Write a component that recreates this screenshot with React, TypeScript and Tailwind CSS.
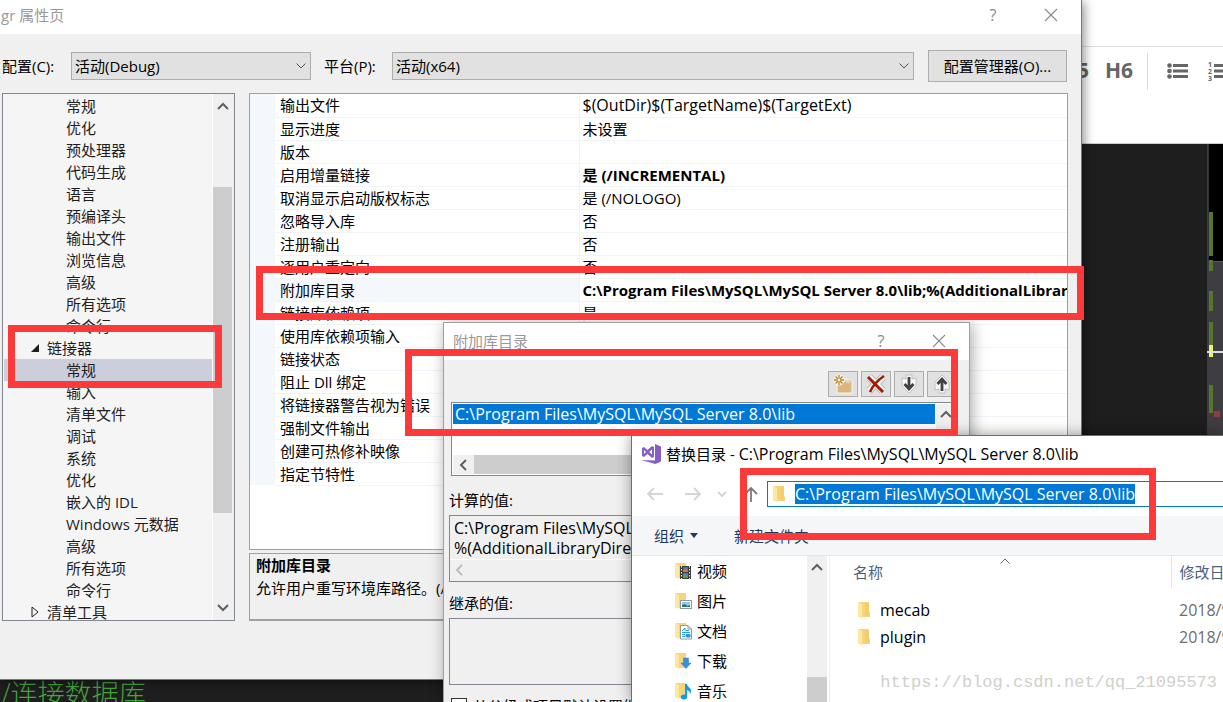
import React from "react";

// Linker page tree, in display order
interface TreeItem {
	label: string;
	state?: "open" | "closed";
	selected?: boolean;
}

interface PropertyRow {
	name: string;
	value?: string;
	bold?: boolean;
	macro?: boolean;
	selected?: boolean;
}

const treeItems: TreeItem[] = [
	{ label: "常规" },
	{ label: "优化" },
	{ label: "预处理器" },
	{ label: "代码生成" },
	{ label: "语言" },
	{ label: "预编译头" },
	{ label: "输出文件" },
	{ label: "浏览信息" },
	{ label: "高级" },
	{ label: "所有选项" },
	{ label: "命令行" },
	{ label: "链接器", state: "open" },
	{ label: "常规", selected: true },
	{ label: "输入" },
	{ label: "清单文件" },
	{ label: "调试" },
	{ label: "系统" },
	{ label: "优化" },
	{ label: "嵌入的 IDL" },
	{ label: "Windows 元数据" },
	{ label: "高级" },
	{ label: "所有选项" },
	{ label: "命令行" },
	{ label: "清单工具", state: "closed" },
];

const properties: PropertyRow[] = [
	{ name: "输出文件", value: "$(OutDir)$(TargetName)$(TargetExt)", macro: true },
	{ name: "显示进度", value: "未设置" },
	{ name: "版本" },
	{ name: "启用增量链接", value: "是 (/INCREMENTAL)", bold: true },
	{ name: "取消显示启动版权标志", value: "是 (/NOLOGO)" },
	{ name: "忽略导入库", value: "否" },
	{ name: "注册输出", value: "否" },
	{ name: "逐用户重定向", value: "否" },
	{ name: "附加库目录", value: "C:\\Program Files\\MySQL\\MySQL Server 8.0\\lib;%(AdditionalLibraryDirectories)", bold: true, selected: true },
	{ name: "链接库依赖项", value: "是" },
	{ name: "使用库依赖项输入" },
	{ name: "链接状态" },
	{ name: "阻止 Dll 绑定" },
	{ name: "将链接器警告视为错误" },
	{ name: "强制文件输出" },
	{ name: "创建可热修补映像" },
	{ name: "指定节特性" },
];

const LIB_PATH = "C:\\Program Files\\MySQL\\MySQL Server 8.0\\lib";

/* ---------- Icons ---------- */

function Chevron({ dir, className = "text-[#606060]" }: { dir: "up" | "down" | "left"; className?: string }) {
	const d = { up: "M1 9 L6 4 L11 9", down: "M1 3 L6 8 L11 3", left: "M8 1 L3 6 L8 11" }[dir];
	return (
		<svg viewBox="0 0 12 12" className={`w-3 h-3 ${className}`} fill="none" stroke="currentColor" strokeWidth="2">
			<path d={d} />
		</svg>
	);
}

function CloseIcon() {
	return (
		<svg viewBox="0 0 14 14" className="w-3.5 h-3.5" fill="none" stroke="#8a8a8a" strokeWidth="1.1">
			<path d="M1 1 L13 13 M13 1 L1 13" />
		</svg>
	);
}

function Folder() {
	return (
		<svg viewBox="0 0 18 18" className="w-[18px] h-[18px]">
			<path d="M1 1 H11 V10 L12 12 V16 H1 Z" fill="#f6d57a" />
			<path d="M7 2 H11 V15 H7 Z" fill="#f3ce6c" />
			<path d="M0 1 L4 3 V17.500 L0 15.500 Z" fill="#fde8a2" />
		</svg>
	);
}

function LibraryFolder({ kind }: { kind: string }) {
	return (
		<svg viewBox="0 0 18 18" className="w-[18px] h-[18px]">
			<path d="M1 1 H11 V16 H1 Z" fill="#f6d57a" />
			<path d="M0 1 L4 3 V17 L0 15 Z" fill="#fde8a2" />
			{kind === "video" && (
				<g>
					<rect x="5" y="4" width="11" height="13" fill="#3d3d3d" />
					<path d="M6.500 4 V17 M14.500 4 V17" stroke="#e8e8e8" strokeWidth="1" strokeDasharray="1.500 1.500" />
					<rect x="8" y="5" width="5" height="5" fill="#4464c8" />
					<rect x="8" y="11" width="5" height="5" fill="#3f7ee0" />
					<path d="M8 8 L11 6 L13 9 V10 H8 Z" fill="#c97b3c" />
					<path d="M8 14 L10 12 L13 15 V16 H8 Z" fill="#6aa03d" />
				</g>
			)}
			{kind === "picture" && (
				<g>
					<rect x="5.500" y="8.500" width="11" height="8" fill="#fff" stroke="#8f989f" />
					<rect x="7" y="10" width="8" height="5" fill="#8ecbf0" />
					<path d="M7 13 L10 12 L12 14 L15 13 V15 H7 Z" fill="#2f6f79" />
				</g>
			)}
			{kind === "document" && (
				<g>
					<path d="M5.500 3.500 H13 L16.500 7 V17 H5.500 Z" fill="#fff" stroke="#8f989f" />
					<path d="M13 3.500 V7 H16.500" fill="none" stroke="#8f989f" />
					<path d="M7 9 L10 6 V9 M7 10.500 H15 M7 12.500 H10 M7 14.500 H10" fill="none" stroke="#2d9be8" />
					<path d="M11 8.500 H14 M11 12.500 H15 V15 H11 Z" fill="#4a90a0" stroke="#2d9be8" />
				</g>
			)}
			{kind === "download" && <path d="M8.500 6 H13.500 V11 H16 L11 16.500 L6 11 H8.500 Z" fill="#3590e2" stroke="#2a7ac5" strokeWidth=".5" />}
			{kind === "music" && (
				<g fill="#0f9cf0">
					<ellipse cx="9" cy="15" rx="3.200" ry="2.500" />
					<path d="M10 2 H12 C12 5 16 5.500 16 9 C16 10.500 15.500 11.500 15 12 C15 9 12.500 8 12.200 8 V15 H10 Z" />
				</g>
			)}
		</svg>
	);
}

function StudioLogo() {
	return (
		<svg viewBox="0 0 20 20" className="w-5 h-5">
			<path fillRule="evenodd" d="M1 4 L3 3 L6.500 6 L11 2 L13 3 V13 L11 14 L6.500 10 L3 13 L1 12 Z M3 6 V10 L5 8 Z M11 5.500 L8.200 8 L11 10.500 Z" fill="#865fc5" />
			<path d="M14 0 L20 2.500 V17.500 L14.500 20 L0 16 L14 16.500 Z" fill="#865fc5" />
		</svg>
	);
}

function NavArrow({ d, color }: { d: string; color: string }) {
	return (
		<svg viewBox="0 0 16 16" className="w-4 h-4" fill="none" stroke={color} strokeWidth="1.8">
			<path d={d} />
		</svg>
	);
}

/* ---------- Shared pieces ---------- */

function TitleBar({ title, className }: { title: string; className: string }) {
	return (
		<header className={`flex items-center bg-white text-[#999] ${className}`}>
			<h1 className="flex-1">{title}</h1>
			<button className="w-8 text-base text-[#8a8a8a]" title="帮助">
				?
			</button>
			<button className="ml-7 flex w-7 justify-center" title="关闭">
				<CloseIcon />
			</button>
		</header>
	);
}

function Dropdown({ id, value, className }: { id: string; value: string; className: string }) {
	return (
		<div className={`relative ${className}`}>
			<select id={id} defaultValue={value} className="h-7 w-full appearance-none border border-[#adadad] bg-[#e1e1e1] pl-[3px] outline-none">
				<option value={value}>{value}</option>
			</select>
			<svg viewBox="0 0 10 6" className="pointer-events-none absolute right-[5px] top-[11px] h-1.5 w-2.5" fill="none" stroke="#555">
				<path d="M.5 .5 L5 5 L9.500 .5" />
			</svg>
		</div>
	);
}

/* ---------- Page behind the dialogs ---------- */

function Backdrop() {
	return (
		<div className="flex h-full flex-col">
			<div className="h-[47px] border-b border-[#ddd]" />
			<div className="flex h-[97px] items-start justify-end overflow-hidden border-b border-[#ccc] pt-1.5 text-[#666]">
				<div className="flex h-[37px] shrink-0 items-center text-[21px] font-bold">
					<button className="mr-4 pb-1">H5</button>
					<button className="mr-3.5 pb-1">H6</button>
					<span className="mr-[19px] h-full w-px bg-[#ddd]" />
					<button title="无序列表" className="mr-5 pb-0.5">
						<svg viewBox="0 0 21 16" className="h-4 w-[21px]" fill="currentColor">
							<circle cx="2.500" cy="2.500" r="2.300" />
							<circle cx="2.500" cy="8" r="2.300" />
							<circle cx="2.500" cy="13.500" r="2.300" />
							<path d="M6 1 H21 V4 H6 Z M6 6.500 H21 V9.500 H6 Z M6 12 H21 V15 H6 Z" />
						</svg>
					</button>
					<button title="有序列表" className="-mr-1.5 pb-0.5">
						<svg viewBox="0 0 21 20" className="h-5 w-[21px]" fill="currentColor">
							<text x="0" y="6" fontSize="7">1</text>
							<text x="0" y="13" fontSize="7">2</text>
							<text x="0" y="20" fontSize="7">3</text>
							<path d="M6 3 H21 V6 H6 Z M6 8.500 H21 V11.500 H6 Z M6 14 H21 V17 H6 Z" />
						</svg>
					</button>
				</div>
			</div>
			<div className="flex min-h-0 flex-1 bg-[#1e1e1e]">
				<div className="flex min-w-0 flex-1 items-end">
					<p className="h-[22px] overflow-hidden whitespace-nowrap font-['Noto_Sans_CJK_SC',sans-serif] text-[27px] leading-[26px] font-light text-[#46a53e]">/连接数据库</p>
				</div>
				{/* Scroll map of the code editor */}
				<svg viewBox="0 0 16 558" className="h-[558px] w-4 shrink-0">
					<rect width="16" height="558" fill="#3e3e42" />
					<rect x="2" width="14" height="117" fill="#000" />
					<rect x="1" width="1" height="117" fill="#333337" />
					<rect x="6" y="117" width="10" height="1" fill="#555" />
					<path d="M2 68 H6 V112 H2 Z M2 116 H6 V127 H2 Z M2 147 H6 V167 H2 Z M2 178 H6 V201 H2 Z M2 241 H6 V269 H2 Z" fill="#577430" />
					<rect x="2" y="201" width="4" height="12" fill="#eef07a" />
					<rect y="207" width="16" height="2" fill="#ddd" />
					<rect x="7" y="267" width="6" height="6" fill="#953b42" />
				</svg>
			</div>
		</div>
	);
}

/* ---------- Property pages ---------- */

function Tree() {
	return (
		<div className="flex w-[233px] shrink-0 border border-[#828790] bg-[#f5f5f5]">
			<ul className="min-w-0 flex-1 overflow-hidden pt-px pl-px text-[#1e1e1e]">
				{treeItems.map((item, i) => (
					<li key={i} className={`flex h-[22px] items-center whitespace-nowrap ${item.selected ? "bg-[#cccedb]" : ""} ${item.state ? "pl-[26px]" : "pl-[62px]"}`}>
						{item.state && (
							<svg viewBox="0 0 10 12" className="mr-[7px] h-3 w-2.5">
								{item.state === "open" ? <path d="M9 2 V10 H1 Z" fill="#1e1e1e" /> : <path d="M2 1 L8 6 L2 11 Z" fill="none" stroke="#1e1e1e" />}
							</svg>
						)}
						{item.label}
					</li>
				))}
			</ul>
			<div className="flex w-[22px] flex-col items-center border-l border-white bg-[#f0f0f0] pr-0.5">
				<div className="flex h-[93px] items-start pt-1.5">
					<Chevron dir="up" />
				</div>
				<div className="h-[326px] w-full bg-[#cdcdcd]" />
				<div className="flex flex-1 items-end pb-1.5">
					<Chevron dir="down" />
				</div>
			</div>
		</div>
	);
}

function PropertyGrid() {
	return (
		<div className="h-[457px] overflow-hidden border border-[#a0a0a0] bg-white">
			<table className="w-full table-fixed border-collapse">
				<colgroup>
					<col className="w-[25px]" />
					<col className="w-[304px]" />
					<col />
				</colgroup>
				<tbody>
					{properties.map((row) => (
						<tr key={row.name} className="h-[23px]">
							<td className="bg-[#f4f7fc] p-0" />
							<td className={`border-r border-b border-[#f0f3f9] p-0 pl-[5px] leading-[22px] whitespace-nowrap ${row.selected ? "bg-[#f4f7fc]" : ""}`}>{row.name}</td>
							<td className={`overflow-hidden border-b border-[#f0f3f9] p-0 pl-[3px] leading-[22px] whitespace-nowrap ${row.bold ? "font-bold" : ""} ${row.macro ? "text-[16px]" : ""}`}>{row.value}</td>
						</tr>
					))}
				</tbody>
			</table>
		</div>
	);
}

function PropertyPages() {
	return (
		<section className="absolute top-0 right-[141px] bottom-[22px] left-0 flex flex-col border-r border-b border-[#777] bg-[#f0f0f0] shadow-[2px_2px_10px_rgba(0,0,0,0.45)]">
			<TitleBar title="gr 属性页" className="h-[34px] shrink-0 pb-1 pl-px pr-4" />
			<div className="flex items-center pt-4 pr-3.5 pb-[11px] pl-0.5">
				<label htmlFor="config" className="w-[69px]">
					配置(C):
				</label>
				<Dropdown id="config" value="活动(Debug)" className="w-60" />
				<label htmlFor="platform" className="w-[81px] pl-[13px]">
					平台(P):
				</label>
				<Dropdown id="platform" value="活动(x64)" className="flex-1" />
				<button className="ml-3.5 h-8 w-[139px] border border-[#adadad] bg-[#e1e1e1]">配置管理器(O)...</button>
			</div>
			<div className="flex h-[528px] gap-3.5 pr-[13px] pl-0.5">
				<Tree />
				<div className="flex min-w-0 flex-1 flex-col gap-[3px]">
					<PropertyGrid />
					<div className="flex-1 overflow-hidden border border-b-2 border-[#a0a0a0] px-1.5 leading-[23px] whitespace-nowrap">
						<h2 className="font-bold">附加库目录</h2>
						<p>允许用户重写环境库路径。(/LIBPATH:folder)</p>
					</div>
				</div>
			</div>
		</section>
	);
}

/* ---------- Additional library directories ---------- */

function LibraryDialog() {
	const toolButton = "flex h-[26px] w-[30px] items-center justify-center border border-[#adadad] bg-[#e1e1e1]";
	return (
		<section className="absolute top-[322px] bottom-0 left-[443px] w-[527px] overflow-hidden border border-b-0 border-[#a0a0a0] bg-[#f0f0f0] shadow-[2px_2px_14px_rgba(0,0,0,0.35)]">
			<TitleBar title="附加库目录" className="h-[37px] pr-4 pb-0.5 pl-[9px]" />
			<div className="flex justify-end gap-[3px] pt-[11px] pr-3">
				<button className={toolButton} title="新行">
					<svg viewBox="0 0 20 20" className="h-5 w-5">
						<path d="M4 8 H11 L12 6 H19 V19 H4 Z" fill="#dcb67a" stroke="#f6f6f6" />
						<path d="M13 8 H17.500" stroke="#f6f6f6" />
						<circle cx="6" cy="6" r="5.500" fill="#f6f6f6" />
						<path d="M6 1 V11 M1 6 H11 M2.500 2.500 L9.500 9.500 M9.500 2.500 L2.500 9.500" stroke="#c27d1a" strokeWidth="1.300" />
						<circle cx="6" cy="6" r="1.400" fill="#f6f6f6" />
					</svg>
				</button>
				<button className={toolButton} title="删除">
					<svg viewBox="0 0 20 20" className="h-5 w-5" fill="none">
						<path d="M3 3 L17 17 M17 3 L3 17" stroke="#b5b5b5" strokeWidth="7.500" />
						<path d="M3 3 L17 17 M17 3 L3 17" stroke="#f8f8f8" strokeWidth="6" />
						<path d="M2 3 L17 18" stroke="#a61c00" strokeWidth="3" />
						<path d="M18 2 C12 6 7 11 4 18" stroke="#a61c00" strokeWidth="2.600" />
					</svg>
				</button>
				<button className={toolButton} title="下移">
					<svg viewBox="0 0 20 20" className="h-5 w-5" fill="none">
						<path d="M7 1 H13 V5 L17 4 V12 L10 19 L3 12 V4 L7 5 Z" fill="#f8f8f8" stroke="#b5b5b5" strokeWidth=".8" />
						<path d="M10 3 V15 M5.500 10 L10 15 L14.500 10" stroke="#424242" strokeWidth="2.800" />
					</svg>
				</button>
				<button className={toolButton} title="上移">
					<svg viewBox="0 0 20 20" className="h-5 w-5" fill="none">
						<path d="M7 19 H13 V15 L17 16 V8 L10 1 L3 8 V16 L7 15 Z" fill="#f8f8f8" stroke="#b5b5b5" strokeWidth=".8" />
						<path d="M10 17 V5 M5.500 10 L10 5 L14.500 10" stroke="#424242" strokeWidth="2.800" />
					</svg>
				</button>
			</div>
			<div className="mt-[5px] mr-3 ml-[7px] flex h-[74px] flex-col border border-[#828790] bg-white p-px">
				<div className="flex flex-1">
					<ul className="flex-1">
						<li className="h-5 bg-[#0078d7] pl-0.5 text-[16px] leading-5 text-white">{LIB_PATH}</li>
					</ul>
					<div className="ml-px flex w-[19px] justify-center bg-[#f0f0f0] pt-1">
						<Chevron dir="up" />
					</div>
				</div>
				<div className="flex h-[19px] items-center bg-[#f0f0f0]">
					<div className="flex w-[21px] justify-center">
						<Chevron dir="left" />
					</div>
					<div className="mr-5 h-full flex-1 bg-[#cdcdcd]" />
				</div>
			</div>
			<div className="pt-[13px] pr-3 pl-[5px]">
				<label htmlFor="evaluated" className="block h-[26px] leading-[22px]">
					计算的值:
				</label>
				<div className="h-[67px] border border-[#828790]">
					<textarea id="evaluated" readOnly wrap="off" defaultValue={`${LIB_PATH}\n%(AdditionalLibraryDirectories)`} className="block h-[44px] w-full resize-none overflow-hidden border-b border-white pt-0.5 pl-1 text-[16px] leading-5 outline-none" />
					<div className="flex h-5 items-center pl-1">
						<Chevron dir="left" className="text-[#bdbdbd]" />
					</div>
				</div>
				<label htmlFor="inherited" className="block h-9 pt-2.5 leading-[22px]">
					继承的值:
				</label>
				<textarea id="inherited" readOnly className="block h-[67px] w-full resize-none border border-[#828790] outline-none" />
				<label className="mt-2.5 flex items-center gap-1.5 pl-0.5">
					<input type="checkbox" className="h-4 w-4 appearance-none border border-[#333] bg-white" />
					<span className="whitespace-nowrap">从父级或项目默认设置继承(I)</span>
				</label>
			</div>
		</section>
	);
}

/* ---------- Folder picker ---------- */

const places = [
	{ kind: "video", label: "视频" },
	{ kind: "picture", label: "图片" },
	{ kind: "document", label: "文档" },
	{ kind: "download", label: "下载" },
	{ kind: "music", label: "音乐" },
];

const folders = [
	{ name: "mecab", date: "2018/9/12 20:36" },
	{ name: "plugin", date: "2018/9/12 20:36" },
];

function FolderPicker() {
	return (
		<section className="absolute top-[435px] right-0 bottom-0 left-[631px] flex flex-col overflow-hidden border-t border-l border-[#1883d7] bg-white shadow-[0_0_14px_rgba(0,0,0,0.4)]">
			<header className="flex h-9 shrink-0 items-center gap-[5px] pl-[9px]">
				<StudioLogo />
				<h1>
					替换目录 - <span className="text-[16px]">{LIB_PATH}</span>
				</h1>
			</header>
			<div className="flex h-11 shrink-0 items-center pl-[15px]">
				<button title="后退" className="mr-[22px]">
					<NavArrow d="M16 8 H1 M7 2 L1 8 L7 14" color="#d4d4d4" />
				</button>
				<button title="前进" className="mr-4">
					<NavArrow d="M0 8 H15 M9 2 L15 8 L9 14" color="#d4d4d4" />
				</button>
				<button title="最近位置" className="mr-4">
					<svg viewBox="0 0 10 10" className="h-2.5 w-2.5" fill="none" stroke="#d4d4d4" strokeWidth="1.800">
						<path d="M1 3 L5 7 L9 3" />
					</svg>
				</button>
				<button title="上移" className="mr-2">
					<NavArrow d="M8 16 V2 M2 8 L8 2 L14 8" color="#7a7a7a" />
				</button>
				<div className="flex h-[26px] flex-1 items-center border border-r-0 border-[#0078d7] pl-[5px]">
					<Folder />
					<input aria-label="地址" readOnly defaultValue={LIB_PATH} className="ml-1 h-5 [field-sizing:content] bg-[#0078d7] text-[16px] text-white outline-none" />
				</div>
			</div>
			<div className="flex h-10 shrink-0 items-center border-b border-[#e4e7ea] bg-[#f5f6f7] pl-[22px] text-[#1e395b]">
				<button className="mr-9 flex items-center gap-1.5">
					组织
					<svg viewBox="0 0 8 5" className="h-[5px] w-2" fill="currentColor">
						<path d="M0 0 H8 L4 5 Z" />
					</svg>
				</button>
				<button>新建文件夹</button>
			</div>
			<div className="flex min-h-0 flex-1">
				<ul className="w-[175px] shrink-0">
					{places.map((place) => (
						<li key={place.kind} className="flex h-[30px] items-center gap-1 pl-[43px]">
							<LibraryFolder kind={place.kind} />
							{place.label}
						</li>
					))}
				</ul>
				<div className="flex w-5 flex-col items-center bg-[#f0f0f0]">
					<div className="h-[121px] shrink-0 pt-[5px]">
						<Chevron dir="up" />
					</div>
					<div className="w-full flex-1 bg-[#cdcdcd]" />
				</div>
				<div className="ml-0.5 min-w-0 flex-1 overflow-hidden border-l border-[#eee]">
					<table className="w-full table-fixed border-collapse">
						<colgroup>
							<col />
							<col className="w-[52px]" />
						</colgroup>
						<thead className="text-[#4c607a]">
							<tr className="h-8">
								<th className="relative border-r border-[#e5e5e5] p-0 pl-[23px] text-left font-normal">
									名称
									<svg viewBox="0 0 10 6" className="absolute top-0.5 left-1/2 h-1.5 w-2.5" fill="none" stroke="#666">
										<path d="M.5 5.500 L5 1 L9.500 5.500" />
									</svg>
								</th>
								<th className="overflow-hidden p-0 pl-2 text-left font-normal whitespace-nowrap">修改日期</th>
							</tr>
						</thead>
						<tbody className="text-[16px]">
							<tr className="h-2" />
							{folders.map((folder) => (
								<tr key={folder.name} className="h-[27px]">
									<td className="p-0 pl-7">
										<div className="flex items-center gap-1">
											<Folder />
											{folder.name}
										</div>
									</td>
									<td className="overflow-hidden p-0 pl-2 whitespace-nowrap text-[#6d6d6d]">{folder.date}</td>
								</tr>
							))}
						</tbody>
					</table>
					<p className="mt-[22px] pr-1.5 text-right font-['Liberation_Mono',monospace] text-[17px] whitespace-nowrap text-[#d0d0cc]">https://blog.csdn.net/qq_21095573</p>
				</div>
			</div>
		</section>
	);
}

export default function App() {
	return (
		<main className="relative h-screen overflow-hidden bg-white font-['Open_Sans','Noto_Sans_CJK_SC',sans-serif] text-[15px] leading-[22px] text-black">
			<Backdrop />
			<PropertyPages />
			<LibraryDialog />
			<FolderPicker />

			{/* Red highlight frames */}
			<div className="pointer-events-none absolute top-[325px] left-2 h-[63px] w-[214px] border-7 border-[#fc3a39]" />
			<div className="pointer-events-none absolute top-[266px] right-[139px] left-64 h-[54px] border-7 border-[#fc3a39]" />
			<div className="pointer-events-none absolute top-[349px] left-[405px] h-[87px] w-[553px] border-7 border-[#fc3a39]" />
			<div className="pointer-events-none absolute top-[468px] left-[740px] h-[72px] w-[416px] border-7 border-[#fc3a39]" />
		</main>
	);
}
